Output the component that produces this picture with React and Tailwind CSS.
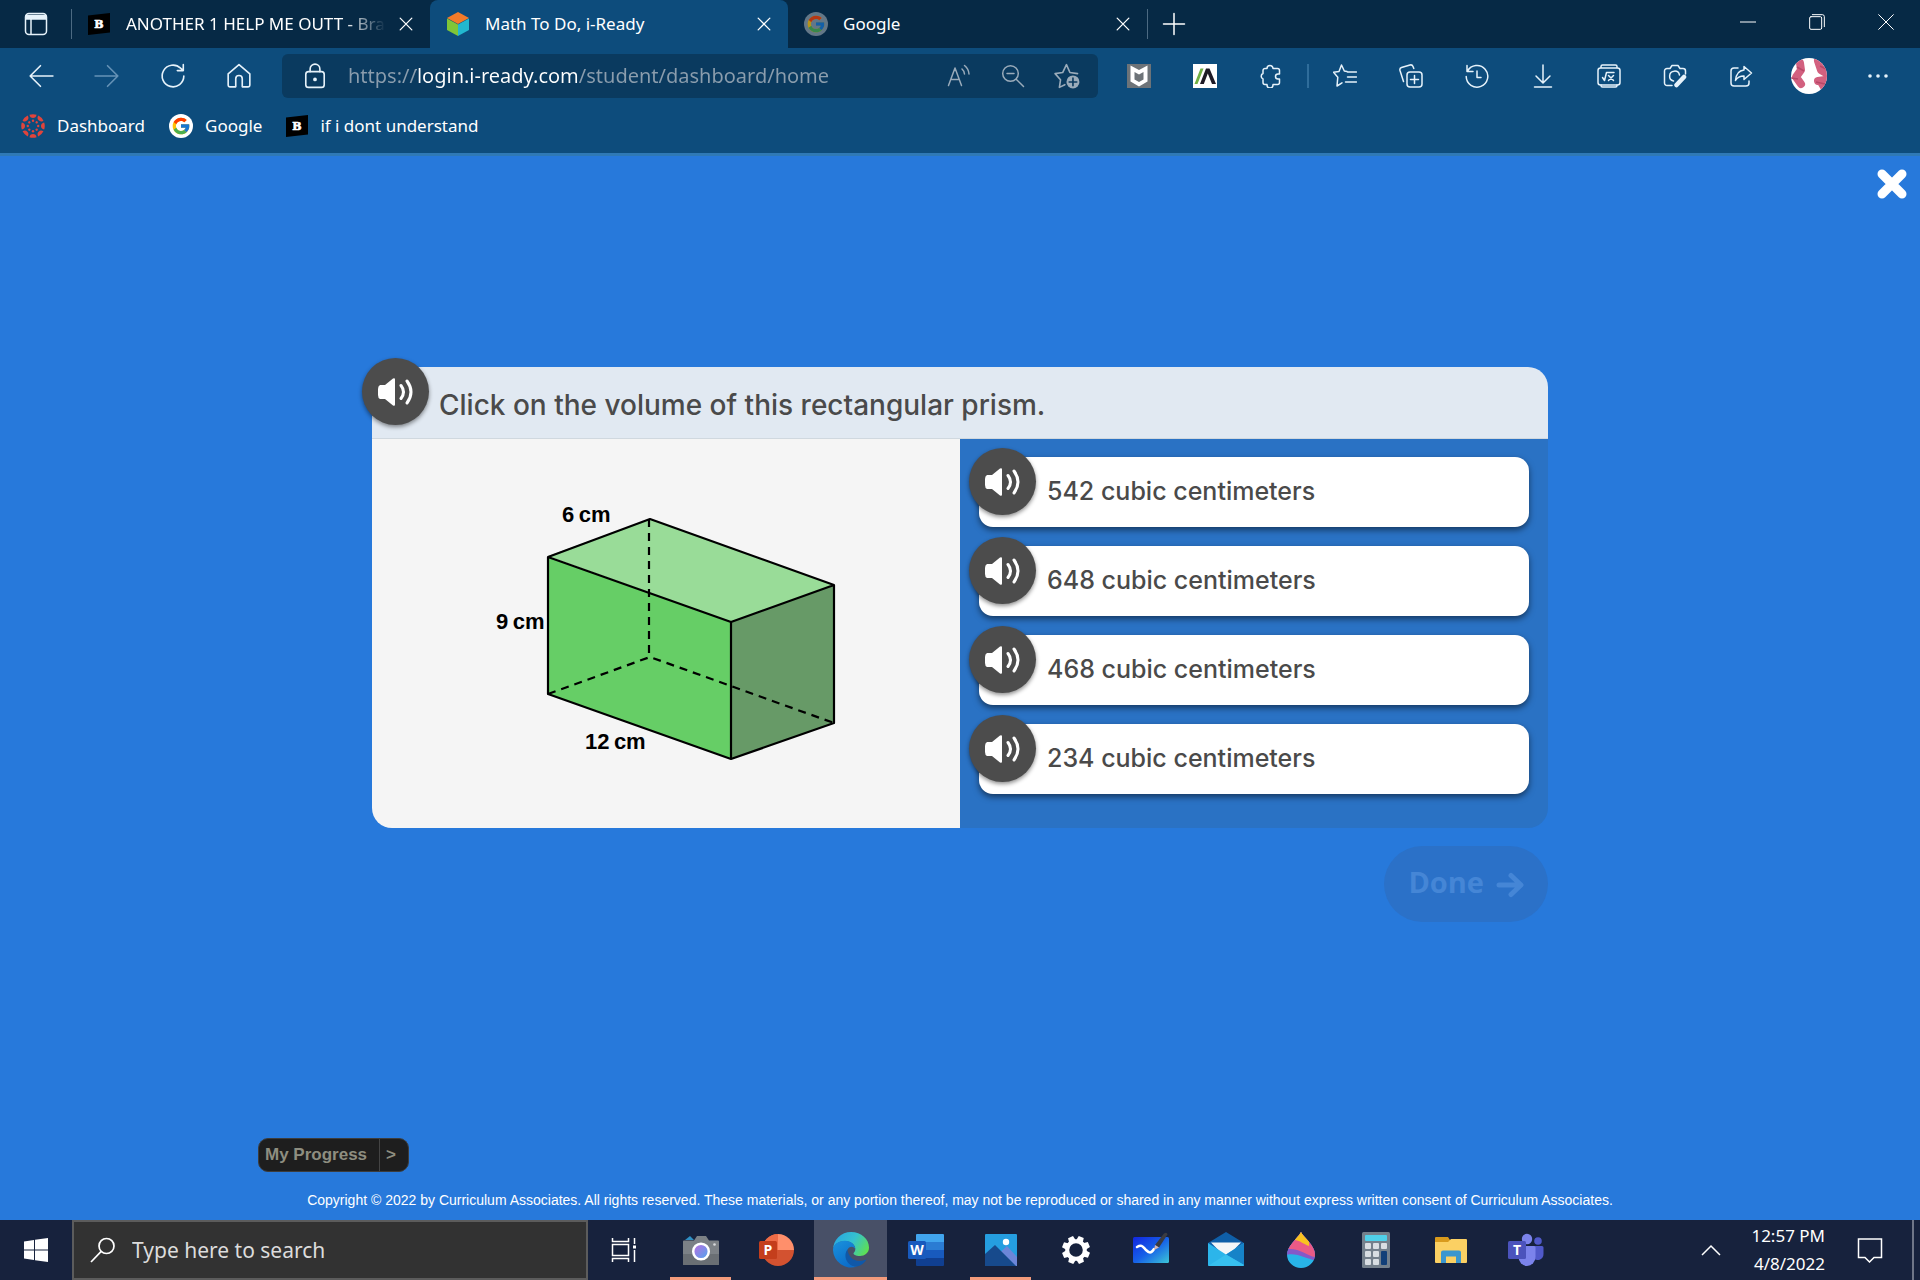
import React, { useState } from 'react';
import { FcGoogle } from 'react-icons/fc';


const answers = [
  '542 cubic centimeters',
  '648 cubic centimeters',
  '468 cubic centimeters',
  '234 cubic centimeters',
]


/** thin outline icon used all over the browser toolbar */
function Line({ children, size = 'w-6 h-6', color = 'text-[#e6f2fa]' }) {
  return (
    <svg viewBox="0 0 24 24" className={`${size} ${color}`} fill="none" stroke="currentColor"
      strokeWidth="1.5" strokeLinecap="round" strokeLinejoin="round" aria-hidden="true">
      {children}
    </svg>
  )
}

function ToolButton({ label, children, width = 'w-[66px]' }) {
  return (
    <button type="button" aria-label={label} className={`${width} h-11 shrink-0 flex justify-center items-center`}>
      {children}
    </button>
  )
}

function Brainly() {
  return (
    <svg viewBox="0 0 22 22" className="w-[22px] h-[22px] shrink-0" aria-hidden="true">
      <path d="M0 2.500 22 0v19.500L0 22Z" fill="#000" />
      <text x="11" y="15" textAnchor="middle" fontSize="11" fontWeight="900" fill="#fff" stroke="#fff"
        strokeWidth="0.6" fontFamily="DejaVu Serif, serif">B</text>
    </svg>
  )
}

function Cube() {
  return (
    <svg viewBox="0 0 24 26" className="w-6 h-[26px] shrink-0" aria-hidden="true">
      <path d="M12 1 23 7 12 13 1 7Z" fill="#f47b29" />
      <path d="M1 7.500 12 13.500V25L1 19Z" fill="#7fc637" />
      <path d="M23 7.500 12 13.500V25L23 19Z" fill="#22b8cf" />
    </svg>
  )
}

function CanvasLogo() {
  return (
    <svg viewBox="0 0 24 24" className="w-6 h-6 shrink-0" aria-hidden="true">
      {[0, 45, 90, 135, 180, 225, 270, 315].map(a => (
        <g key={a} transform={`rotate(${a} 12 12)`} fill="#e0443c">
          <path d="M8.400 .8a12 12 0 0 1 7.200 0 3.700 4.200 0 0 1-7.200 0Z" />
          <circle cx="12" cy="6.800" r="1.200" />
        </g>
      ))}
    </svg>
  )
}

function GoogleLogo({ dim }) {
  return (
    <span className={`w-6 h-6 shrink-0 rounded-full flex justify-center items-center ${dim ? 'bg-[#8b98a4] opacity-70' : 'bg-white'}`}>
      <FcGoogle className="w-5 h-5" />
    </span>
  )
}

function CloseTab({ label }) {
  return (
    <button type="button" aria-label={label} className="w-6 h-6 shrink-0 flex justify-center items-center">
      <Line size="w-[14px] h-[14px]" color="text-white"><path strokeWidth="2.200" d="M2 2 22 22M22 2 2 22" /></Line>
    </button>
  )
}

function TabStrip() {
  return (
    <div className="h-12 flex bg-[#062945] text-white text-[17px]">
      <div className="w-[72px] shrink-0 flex items-center">
        <button type="button" aria-label="Tab actions" className="ml-6">
          <Line>
            <rect x="1.500" y="1.500" width="21" height="21" rx="3.500" />
            <path d="M2 3.500h20v3.500H2Z" fill="currentColor" />
            <path d="M7 7v15" />
          </Line>
        </button>
        <span className="w-px h-[30px] ml-auto bg-[#4c6a82]"></span>
      </div>
      <div className="w-[358px] flex items-center pl-4 pr-3">
        <Brainly />
        <span className="flex-1 ml-4 mr-2 whitespace-nowrap [mask-image:linear-gradient(90deg,#000_84%,transparent)]">
          ANOTHER 1 HELP ME OUTT - Bra
        </span>
        <CloseTab label="Close Brainly tab" />
      </div>
      <div className="w-[358px] flex items-center pl-4 pr-3 bg-[#0d4c7c] rounded-t-lg">
        <Cube />
        <span className="flex-1 ml-[15px] whitespace-nowrap">Math To Do, i-Ready</span>
        <CloseTab label="Close i-Ready tab" />
      </div>
      <div className="w-[359px] flex items-center pl-4 pr-3">
        <GoogleLogo dim />
        <span className="flex-1 ml-[15px]">Google</span>
        <CloseTab label="Close Google tab" />
      </div>
      <div className="flex items-center">
        <span className="w-px h-[30px] bg-[#4c6a82]"></span>
        <button type="button" aria-label="New tab" className="ml-[14px]">
          <Line color="text-white"><path d="M12 1.500v21M1.500 12h21" /></Line>
        </button>
      </div>
      <div className="ml-auto flex">
        <ToolButton label="Minimize" width="w-[69px]">
          <Line size="w-4 h-4" color="text-white"><path d="M0 12h24" /></Line>
        </ToolButton>
        <ToolButton label="Restore" width="w-[69px]">
          <Line size="w-4 h-[18px]" color="text-white">
            <rect x="1" y="4" width="18" height="19" rx="2" />
            <path d="M5 1h15a3 3 0 0 1 3 3v15" />
          </Line>
        </ToolButton>
        <ToolButton label="Close" width="w-[69px]">
          <Line size="w-4 h-4" color="text-white"><path d="M1 1 23 23M23 1 1 23" /></Line>
        </ToolButton>
      </div>
    </div>
  )
}

function Toolbar() {
  const [url, setUrl] = useState('https://login.i-ready.com/student/dashboard/home')

  return (
    <div className="flex items-center h-14 px-2">
      <ToolButton label="Back"><Line size="w-[26px] h-[26px]"><path d="M23 12H2M11.500 2.500 2 12l9.500 9.500" /></Line></ToolButton>
      <ToolButton label="Forward"><Line size="w-[26px] h-[26px]" color="text-[#6592b6]"><path d="M1 12h21M12.500 2.500 22 12l-9.500 9.500" /></Line></ToolButton>
      <ToolButton label="Refresh">
        <Line size="w-[26px] h-[26px]"><path d="M22 12a10 10 0 1 1-3-7.200L21.500 7M21.500 1.500V7H16" /></Line>
      </ToolButton>
      <ToolButton label="Home">
        <Line size="w-[26px] h-[26px]"><path d="M2 10 12 1.500 22 10v10.500a1.500 1.500 0 0 1-1.500 1.500H15v-7.500a3 3 0 0 0-6 0V22H3.500A1.500 1.500 0 0 1 2 20.500Z" /></Line>
      </ToolButton>

      <div className="flex-1 h-11 ml-[10px] pl-5 pr-1 flex items-center bg-[#0a3a5f] rounded-md">
        <Line size="w-[26px] h-[26px]">
          <rect x="3.500" y="8" width="17" height="14.500" rx="2.500" />
          <path d="M7.500 8V5.500a4.500 4.500 0 0 1 9 0V8" />
          <circle cx="12" cy="15.200" r="1" fill="currentColor" />
        </Line>
        <input type="text" aria-label="Address" value={url} onChange={e => setUrl(e.target.value)}
          className="flex-1 ml-5 text-[20px] outline-none text-transparent caret-white bg-clip-text bg-[linear-gradient(90deg,#8b9dad_68px,#fff_68px,#fff_229px,#8b9dad_229px)]" />
        <div className="flex">
          <ToolButton label="Read aloud" width="w-[54px]">
            <Line color="text-[#9aabba]"><path d="M1.500 21.500 8 4l6.500 17.500M3.800 15.500h8.400M15 5a7 7 0 0 1 2.500 5M17.500 1.500A12 12 0 0 1 22 10" /></Line>
          </ToolButton>
          <ToolButton label="Zoom out" width="w-[54px]">
            <Line color="text-[#9aabba]"><circle cx="9.500" cy="9.500" r="7.800" /><path d="M6 9.500h7M15.200 15.200 22.500 22.500" /></Line>
          </ToolButton>
          <ToolButton label="Add to favorites" width="w-[54px]">
            <Line size="w-[26px] h-[26px]" color="text-[#9aabba]">
              <path d="M10 20 5 22.500l1-7L1 9.800l7-1L11.500 1.500l3.200 7.300 7 1" />
              <circle cx="17.500" cy="17.500" r="6" fill="currentColor" stroke="none" />
              <path d="M17.500 14v7M14 17.500h7" stroke="#0a3a5f" />
            </Line>
          </ToolButton>
        </div>
      </div>

      <div className="flex items-center ml-2">
        <ToolButton label="McAfee">
          <svg viewBox="0 0 24 24" className="w-6 h-6">
            <path fill="#6d7378" d="M0 0h24v24H0Z" />
            <path fill="#fff" d="M3.500 1.500 12 6l8.500-4.500v16L12 22.500l-8.500-5Z" />
            <path fill="#6d7378" d="M7.500 8 12 10.500 16.500 8v7.500L12 18l-4.500-2.500Z" />
          </svg>
        </ToolButton>
        <ToolButton label="Accelerate">
          <svg viewBox="0 0 24 24" className="w-6 h-6">
            <path fill="#fff" d="M0 0h24v24H0Z" />
            <path fill="#71b043" d="M1.500 20 7.500 4.500h3L4.500 20Z" />
            <path fill="#1e1a26" d="M7 20 13 4.500h3.500L23 20h-4l-4.200-10.500L10.800 20Z" />
          </svg>
        </ToolButton>
        <ToolButton label="Extensions">
          <Line>
            <path d="M8 4.500a3 3 0 0 1 6 0h4.500a2 2 0 0 1 2 2V10H19a2.500 2.500 0 0 0 0 5h1.500v3.500a2 2 0 0 1-2 2H14V21a3 3 0 0 1-6 0v-.5H6a2 2 0 0 1-2-2V15a3 3 0 0 1 0-5.500v-3a2 2 0 0 1 2-2Z" />
          </Line>
        </ToolButton>
        <span className="w-0.5 h-6 mx-[3px] bg-[#2f6d9b]"></span>
        <ToolButton label="Favorites">
          <Line><path d="M14 7.500 11.300 7 8.500 1 6 7.500l-5.500.8 4.300 5L4 22l5-3.200M14.500 8h9M14.500 13h9M12.500 18h11" /></Line>
        </ToolButton>
        <ToolButton label="Collections">
          <Line>
            <rect x="8" y="8" width="15" height="15" rx="3" />
            <path d="M15.500 11.500v8M11.500 15.500h8M4.500 17.500 1 6.500A2.500 2.500 0 0 1 2.500 3.500L11 1a2.500 2.500 0 0 1 3 1.500l.8 2" />
          </Line>
        </ToolButton>
        <ToolButton label="History">
          <Line><path d="M2 1.500V7.500H8M2.500 7.200A10.800 10.800 0 1 1 1.200 12.500M12 7v6.500h4" /></Line>
        </ToolButton>
        <ToolButton label="Downloads">
          <Line><path d="M12 1v17.500M5 12l7 7 7-7M3.500 23h17" /></Line>
        </ToolButton>
        <ToolButton label="Math solver">
          <Line>
            <rect x="1" y="4" width="22" height="17" rx="2.500" />
            <path d="M4 3.500V2.500A1.500 1.500 0 0 1 5.500 1h13A1.500 1.500 0 0 1 20 2.500v1M4 21v.500A1.500 1.500 0 0 0 5.500 23h13a1.500 1.500 0 0 0 1.500-1.500V21" />
            <path d="M5.500 13.500 7.500 16.500 9.500 8.500H17M11.500 11.500l5 5M16.500 11.500l-5 5" />
          </Line>
        </ToolButton>
        <ToolButton label="Web capture">
          <Line>
            <path d="M9 21.500H4A2.500 2.500 0 0 1 1.500 19V7A2.500 2.500 0 0 1 4 4.500h3L9 1.500h6l2 3h3A2.500 2.500 0 0 1 22.500 7v3" />
            <path d="M10.500 17A5 5 0 1 1 16.500 11" />
            <path d="M13.500 21 21 13" strokeWidth="4.500" />
          </Line>
        </ToolButton>
        <ToolButton label="Share">
          <Line>
            <path d="M9 4H5A3 3 0 0 0 2 7v12a3 3 0 0 0 3 3h12a3 3 0 0 0 3-3v-2" />
            <path d="M15 2.500 22.500 9 15 15.500V12c-4 0-6.500 1-8.500 4.500C7 10.500 10 6.500 15 6Z" />
          </Line>
        </ToolButton>
        <ToolButton label="Profile" width="w-[70px]">
          <svg viewBox="0 0 36 36" className="w-9 h-9 rounded-full">
            <path fill="#fff" d="M0 0h36v36H0Z" />
            <g stroke="#d2607f" strokeWidth="8" strokeLinecap="round" strokeLinejoin="round" fill="none">
              <path d="M9 5 10 12 5 19 10 26" />
              <path d="M27 3 30 12 35 15M27 23 34 22M33 29 30 24" />
            </g>
            <g stroke="#b84868" strokeWidth="1.500" fill="none"><path d="M0 20 7 21M6 9 13 13M29 8l6 3M25 24l9 2" /></g>
          </svg>
        </ToolButton>
        <ToolButton label="Settings and more" width="w-[68px]">
          <svg viewBox="0 0 20 4" className="w-5 h-1" fill="#e6f2fa"><circle cx="2" cy="2" r="1.800" /><circle cx="10" cy="2" r="1.800" /><circle cx="18" cy="2" r="1.800" /></svg>
        </ToolButton>
      </div>
    </div>
  )
}

function Bookmarks() {
  return (
    <nav className="h-[49px] flex items-center pl-[21px] pb-1.5 gap-6 text-[17px] text-white">
      <a href="#dashboard" className="flex items-center gap-3"><CanvasLogo />Dashboard</a>
      <a href="#google" className="flex items-center gap-3"><GoogleLogo />Google</a>
      <a href="#brainly" className="flex items-center gap-3"><Brainly />if i dont understand</a>
    </nav>
  )
}


function AudioButton({ label }) {
  return (
    <button type="button" aria-label={label} className="w-[67px] h-[67px] absolute -top-[9px] -left-[10px] rounded-full bg-[#4c4c4c] shadow-[0_2px_4px_rgba(0,0,0,0.45)] flex justify-center items-center">
      <svg viewBox="0 0 38 28" className="w-[38px] h-7" fill="none" stroke="#fff" strokeWidth="3" strokeLinecap="round" aria-hidden="true">
        <path d="M3 7h5l8-6.500q2-1 2 1v25q0 2-2 1L8 21H3q-2-1-2-4v-6q0-3 2-4Z" fill="#fff" stroke="none" />
        <path d="M24 7.500q5 6.500 0 13M30 3q8 11 0 22" />
      </svg>
    </button>
  )
}

function Prism() {
  return (
    <svg viewBox="0 -10 350 270" className="w-[350px] h-[270px]" role="img" aria-label="Rectangular prism">
      <path d="M58 50 160 13 344 79 241 116Z" fill="#99dc98" />
      <path d="M58 51 241 116V253L58 188Z" fill="#66ce66" />
      <path d="M241 116 344 79V217L241 253Z" fill="#679a67" />
      <g fill="none" stroke="#000" strokeWidth="2.200" strokeLinejoin="round">
        <path d="M58 51 160 13 344 79V217L241 253 58 188ZM58 51 241 116 344 79M241 116V253" />
        <path d="M159 13V151M58 188 160 151 344 217" strokeDasharray="8 6" />
      </g>
      <g fontFamily="Liberation Sans, Arial, sans-serif" fontWeight="700" fontSize="22" fill="#000">
        <text x="72" y="16">6&#8201;cm</text>
        <text x="6" y="123">9&#8201;cm</text>
        <text x="95" y="243">12&#8201;cm</text>
      </g>
    </svg>
  )
}

function Question() {
  return (
    <div className="max-w-[1176px] mx-auto font-['Inter',sans-serif] font-medium text-[#4a4a4a]">
      <div className="relative h-[72px] pl-[67px] flex items-center bg-[#e1e9f2] rounded-t-[20px] border-b border-[#d0d8df]">
        <AudioButton label="Read the question" />
        <h1 className="text-[28px] pt-1">Click on the volume of this rectangular prism.</h1>
      </div>
      <div className="grid grid-cols-2">
        <div className="bg-[#f5f5f5] rounded-bl-[20px] flex justify-center pt-[57px]">
          <div className="mr-0.5"><Prism /></div>
        </div>
        <div className="bg-[#2a72c4] rounded-br-[20px] pt-[18px] pb-[34px] px-[19px] flex flex-col gap-[19px]">
          {answers.map(answer => (
            <div key={answer} className="relative">
              <button type="button" className="w-full h-[70px] pl-[68px] text-left text-[25px] bg-white rounded-[14px] shadow-[0_3px_6px_rgba(0,0,0,0.5)]">
                {answer}
              </button>
              <AudioButton label={`Read ${answer}`} />
            </div>
          ))}
        </div>
      </div>
      <div className="flex justify-end pt-[18px]">
        <button type="button" disabled className="h-[76px] px-6 flex items-center gap-3 rounded-full bg-[#2b71c8] text-[#4586d6] text-[29px] font-bold font-['Open_Sans',sans-serif]">
          <span className="pb-1">Done</span>
          <svg viewBox="0 0 28 26" className="w-7 h-[26px] mt-0.5" fill="none" stroke="currentColor" strokeWidth="5" strokeLinecap="round" strokeLinejoin="round" aria-hidden="true">
            <path d="M3 13h21M15 3.500 25 13 15 22.500" />
          </svg>
        </button>
      </div>
    </div>
  )
}


/* taskbar icons */

function Camera() {
  return (
    <svg viewBox="0 0 36 36" className="w-9 h-9">
      <defs><linearGradient id="lens" x1="0" y1="0" x2="1" y2="1"><stop stopColor="#c06be0" /><stop offset="1" stopColor="#4aa8ee" /></linearGradient></defs>
      <path d="M2 8 7 4l4 4Z" fill="#2f8fc4" />
      <path d="M1 8.500h10L14 4h9l3 4.500h9a1 1 0 0 1 1 1V32a1 1 0 0 1-1 1H1a1 1 0 0 1-1-1V9.500a1 1 0 0 1 1-1Z" fill="#7c8186" />
      <path d="M0 22h36v10a1 1 0 0 1-1 1H1a1 1 0 0 1-1-1Z" fill="#6a6f74" />
      <circle cx="18" cy="19.500" r="7.800" fill="url(#lens)" stroke="#fff" strokeWidth="2.500" />
      <circle cx="31.500" cy="12.500" r="1.300" fill="#d8dadc" />
    </svg>
  )
}

function PowerPoint() {
  return (
    <svg viewBox="0 0 36 36" className="w-9 h-9">
      <path d="M20 2a16 16 0 1 0 16 16H20Z" fill="#d35230" />
      <path d="M20 2a16 16 0 0 0-16 16h16Z" fill="#ed6c47" />
      <path d="M20 2a16 16 0 0 1 16 16H20Z" fill="#ff8f6b" />
      <rect x="1" y="9" width="18" height="18" rx="1.500" fill="#c43e1c" />
      <text x="10" y="22.500" textAnchor="middle" fontSize="14" fontWeight="700" fill="#fff" fontFamily="Open Sans, sans-serif">P</text>
    </svg>
  )
}

function Edge() {
  return (
    <svg viewBox="0 0 36 36" className="w-9 h-9">
      <defs>
        <linearGradient id="edgeTop" x1="0" y1="0.300" x2="1" y2="0.700"><stop stopColor="#29a8e0" /><stop offset="0.500" stopColor="#35c1d0" /><stop offset="1" stopColor="#5fe04f" /></linearGradient>
        <linearGradient id="edgeLeft" x1="0" y1="0" x2="0.600" y2="1"><stop stopColor="#1a92dd" /><stop offset="1" stopColor="#0c6cc8" /></linearGradient>
      </defs>
      <path d="M0 18A18 18 0 0 1 18 0c10.500 0 18 7.300 18 15.500C36 21 31.500 24 27 24c-4.500 0-6.500-1.600-6.500-2.500 0-.8 1.800-1.400 1.800-4.500 0-4-4.300-8-10.300-8C5 9 0 13.500 0 18Z" fill="url(#edgeTop)" />
      <path d="M0 18C0 13 5 8.800 12 8.800c6 0 10.300 4 10.300 8.200C19 12.500 13.500 15.500 13.500 22c0 7 5 13 10.500 12.500A18 18 0 0 1 0 18Z" fill="url(#edgeLeft)" />
      <path d="M14.500 17.500C9.500 23.500 14 35 24 34.600c4.500-1.100 8-4.100 9.800-7.600-1.300.8-4 2-7.300 2-7 0-11.500-5.500-12-11.500Z" fill="#1058a8" />
    </svg>
  )
}

function Word() {
  return (
    <svg viewBox="0 0 36 36" className="w-9 h-9">
      <path d="M9 2h26a1 1 0 0 1 1 1v7H8V3a1 1 0 0 1 1-1Z" fill="#41a5ee" />
      <path d="M8 10h28v8H8Z" fill="#2b7cd3" />
      <path d="M8 18h28v8H8Z" fill="#185abd" />
      <path d="M8 26h28v7a1 1 0 0 1-1 1H9a1 1 0 0 1-1-1Z" fill="#103f91" />
      <rect y="9" width="18" height="18" rx="1.500" fill="#185abd" />
      <text x="9" y="22.500" textAnchor="middle" fontSize="14" fontWeight="700" fill="#fff" fontFamily="Open Sans, sans-serif">W</text>
    </svg>
  )
}

function Photos() {
  return (
    <svg viewBox="0 0 36 36" className="w-9 h-9">
      <rect x="2" y="2" width="32" height="32" rx="1" fill="#259ee0" />
      <path d="M18 19.500 24 14 34 25v9h-1.500Z" fill="#6c86d8" />
      <path d="M2 22 12 13 33 34H2Z" fill="#174a8c" />
      <circle cx="23" cy="10" r="3.200" fill="#fff" />
    </svg>
  )
}

function Gear() {
  return (
    <svg viewBox="0 0 30 30" className="w-[30px] h-[30px]">
      <circle cx="15" cy="15" r="8.800" fill="none" stroke="#fff" strokeWidth="4" />
      {[22, 67, 112, 157, 202, 247, 292, 337].map(a => (
        <path key={a} d="M12.300 1h5.400l.8 5h-7Z" fill="#fff" transform={`rotate(${a} 15 15)`} />
      ))}
    </svg>
  )
}

function Whiteboard() {
  return (
    <svg viewBox="0 0 36 36" className="w-9 h-9">
      <defs><linearGradient id="board" x1="0" y1="0" x2="1" y2="1"><stop stopColor="#1226e0" /><stop offset="0.500" stopColor="#1660e8" /><stop offset="1" stopColor="#3cc6d8" /></linearGradient></defs>
      <rect y="5" width="36" height="26" rx="1.500" fill="url(#board)" />
      <path d="M4 15c5-3 6 0 9 3s5 4 8-1" fill="none" stroke="#fff" strokeWidth="2.500" strokeLinecap="round" />
      <path d="M22 13 31 1.500q3-2 3.500 1L26 15.500Z" fill="#3b3b40" />
      <path d="M22 13 26 15.500 21 18Z" fill="#d8b8b0" />
    </svg>
  )
}

function Mail() {
  return (
    <svg viewBox="0 0 36 36" className="w-9 h-9">
      <path d="M0 11 18 0l18 11v6H0Z" fill="#0f5fa8" />
      <path d="M3 10.500h30L18 26Z" fill="#f4f6f8" />
      <path d="M0 11 18 22.500 36 11v22a1 1 0 0 1-1 1H1a1 1 0 0 1-1-1Z" fill="#2cb5ea" />
      <path d="M18 22.500 36 11v22Z" fill="#1683c8" />
      <path d="M36 33 18 22.500 0 34h35Z" fill="#37c0ef" />
    </svg>
  )
}

function Paint() {
  return (
    <svg viewBox="0 0 36 36" className="w-9 h-9">
      <defs><clipPath id="drop"><path d="M18 0C20 5 32 13 32 22.500a14 13.500 0 0 1-28 0C4 14 14 7 18 0Z" /></clipPath></defs>
      <g clipPath="url(#drop)">
        <path d="M0 0h36v36H0Z" fill="#28b4e8" />
        <path d="M0 0h36v28C26 30 14 18 0 24Z" fill="#8558c8" />
        <path d="M0 0h36v25C26 27 16 13 0 18Z" fill="#ea5a86" />
        <path d="M12 0h14v14C20 12 18 9 12 8Z" fill="#f9c320" />
      </g>
    </svg>
  )
}

function Calculator() {
  return (
    <svg viewBox="0 0 36 36" className="w-9 h-9">
      <rect x="4" width="28" height="36" rx="1.500" fill="#74808c" />
      <rect x="7" y="3" width="22" height="6" rx="1" fill="#4fd0ea" />
      <g fill="#d9dee3">
        <rect x="7" y="11" width="6" height="6" rx="1" /><rect x="15" y="11" width="6" height="6" rx="1" /><rect x="23" y="11" width="6" height="6" rx="1" />
        <rect x="7" y="19" width="6" height="6" rx="1" /><rect x="15" y="19" width="6" height="6" rx="1" />
        <rect x="7" y="27" width="6" height="6" rx="1" /><rect x="15" y="27" width="6" height="6" rx="1" />
      </g>
      <rect x="23" y="19" width="6" height="14" rx="1" fill="#123f78" />
    </svg>
  )
}

function Explorer() {
  return (
    <svg viewBox="0 0 36 36" className="w-9 h-9">
      <path d="M3 5h12l2 3v5H2V6a1 1 0 0 1 1-1Z" fill="#d99a1c" />
      <path d="M2 10h13l3-3h15a1 1 0 0 1 1 1v22a1 1 0 0 1-1 1H3a1 1 0 0 1-1-1Z" fill="#fbd063" />
      <path d="M8 31V20.500q0-2 2-2h16q2 0 2 2V31h-5v-6.500H13V31Z" fill="#3a96cf" />
    </svg>
  )
}

function Teams() {
  return (
    <svg viewBox="0 0 36 36" className="w-9 h-9">
      <circle cx="30" cy="9" r="3.800" fill="#5059c9" />
      <circle cx="19" cy="7" r="5.200" fill="#7b83eb" />
      <path d="M25 14h9a1.500 1.500 0 0 1 1.500 1.500V22a6 6 0 0 1-10.500 4Z" fill="#5059c9" />
      <path d="M11 14h15a1.500 1.500 0 0 1 1.500 1.500V25a8.500 9 0 0 1-17 0Z" fill="#7b83eb" />
      <rect y="9" width="18" height="18" rx="1.500" fill="#4b53bc" />
      <text x="9" y="22.500" textAnchor="middle" fontSize="14" fontWeight="700" fill="#fff" fontFamily="Open Sans, sans-serif">T</text>
    </svg>
  )
}

const apps = [
  { name: 'Camera', icon: Camera, state: 'open' },
  { name: 'PowerPoint', icon: PowerPoint },
  { name: 'Microsoft Edge', icon: Edge, state: 'active' },
  { name: 'Word', icon: Word },
  { name: 'Photos', icon: Photos, state: 'open' },
  { name: 'Settings', icon: Gear },
  { name: 'Whiteboard', icon: Whiteboard },
  { name: 'Mail', icon: Mail },
  { name: 'Paint 3D', icon: Paint },
  { name: 'Calculator', icon: Calculator },
  { name: 'File Explorer', icon: Explorer },
  { name: 'Teams', icon: Teams },
]

function Taskbar() {
  return (
    <div className="h-[60px] flex bg-[#17223d] text-white">
      <button type="button" aria-label="Start" className="w-[72px] flex justify-center items-center">
        <svg viewBox="0 0 24 24" className="w-6 h-6" fill="#fff"><path d="M0 3.400 10 2v9.500H0ZM11 1.800 24 0v11.500H11ZM0 12.500h10V22L0 20.600ZM11 12.500h13V24l-13-1.800Z" /></svg>
      </button>
      <label className="w-[516px] flex items-center pl-4 bg-[#323232] border-2 border-[#5c5c5c]">
        <svg viewBox="0 0 26 26" className="w-[26px] h-[26px]" fill="none" stroke="#fff" strokeWidth="1.700"><circle cx="16.500" cy="9" r="7.500" /><path d="M11.200 14.300 1 25" /></svg>
        <input type="text" aria-label="Search" placeholder="Type here to search" className="flex-1 ml-4 pt-0.5 text-[21px] outline-none placeholder:text-[#dcdcdc]" />
      </label>
      <button type="button" aria-label="Task view" className="w-[75px] pr-1 flex justify-center items-center">
        <svg viewBox="0 0 26 26" className="w-[26px] h-[26px]" fill="none" stroke="#fff" strokeWidth="1.500">
          <path d="M1.500 7.500h16v11h-16ZM1.500 1v3.500h16V1M1.500 25v-3.500h16V25M23.500 1v6M23.500 13v12" />
          <path d="M22 8.500h3v3h-3Z" fill="#fff" stroke="none" />
        </svg>
      </button>
      {apps.map(({ name, icon: Icon, state }) => (
        <button key={name} type="button" aria-label={name} className="w-[75px] flex justify-center">
          <span className={`h-full flex justify-center items-center border-b-3 pt-[3px] ${state === 'active' ? 'w-[73px] bg-[#485067] border-[#f39b7c]' : state === 'open' ? 'w-[61px] border-[#f39b7c]' : 'w-[61px] border-transparent'}`}>
            <Icon />
          </span>
        </button>
      ))}
      <div className="ml-auto flex items-center">
        <button type="button" aria-label="Show hidden icons" className="mr-[30px]">
          <svg viewBox="0 0 20 12" className="w-5 h-3" fill="none" stroke="#fff" strokeWidth="1.500"><path d="M1 11 10 2l9 9" /></svg>
        </button>
        <div className="text-right text-[17px] leading-7">
          <div>12:57 PM</div>
          <div>4/8/2022</div>
        </div>
        <button type="button" aria-label="Notifications" className="ml-8 mr-[29px]">
          <svg viewBox="0 0 26 26" className="w-[26px] h-[26px]" fill="none" stroke="#fff" strokeWidth="1.500"><path d="M1.500 2h23v18.500H17L12.500 25 8 20.500H1.500Z" /></svg>
        </button>
        <span className="w-0.5 h-[60px] mr-1.5 bg-[#6f7688]"></span>
      </div>
    </div>
  )
}


export default function App() {
  return (
    <div className="min-h-screen flex flex-col bg-[#2779db] font-['Noto_Sans','Open_Sans',sans-serif]">
      <header className="bg-[#0d4c7c] border-b-3 border-[#2f79b5]">
        <TabStrip />
        <Toolbar />
        <Bookmarks />
      </header>

      <main className="flex-1 flex flex-col">
        <div className="flex justify-end pt-3 pr-3">
          <button type="button" aria-label="Close lesson">
            <svg viewBox="0 0 32 32" className="w-8 h-8" fill="none" stroke="#fff" strokeWidth="9" strokeLinecap="round"><path d="M6 6 26 26M26 6 6 26" /></svg>
          </button>
        </div>
        <div className="pt-[167px]"><Question /></div>
        <footer className="mt-auto font-['Liberation_Sans',Arial,sans-serif]">
          <button type="button" className="ml-[258px] h-[34px] flex items-center rounded-[10px] border border-[#3c3c3c] bg-[#1e1e1e] text-[#8e8e80] text-[17px] font-bold">
            <span className="pl-1.5 pr-3">My Progress</span>
            <span className="h-full pl-1.5 pr-3 flex items-center border-l border-[#444]">&gt;</span>
          </button>
          <p className="pt-[18px] pb-[10px] text-center text-[14px] leading-5 text-white">
            Copyright © 2022 by Curriculum Associates. All rights reserved. These materials, or any portion thereof, may not be reproduced or shared in any manner without express written consent of Curriculum Associates.
          </p>
        </footer>
      </main>

      <Taskbar />
    </div>
  )
}
